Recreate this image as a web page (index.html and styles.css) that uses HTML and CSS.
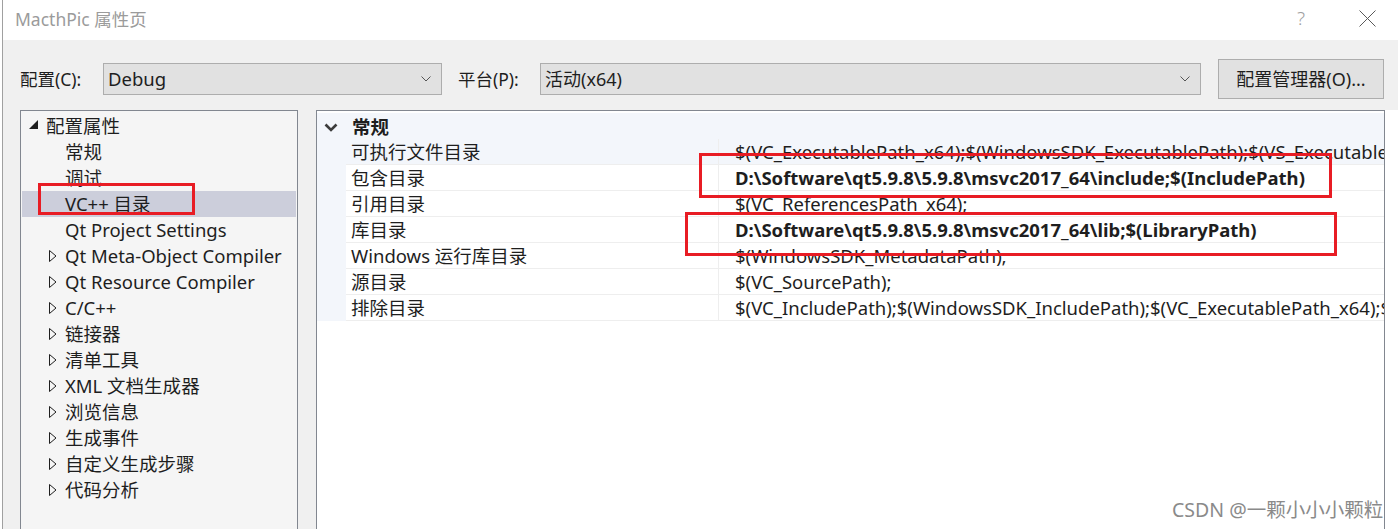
FILE: index.html
```html
<!DOCTYPE html>
<html lang="zh-CN">
<head>
<meta charset="utf-8">
<title>MacthPic 属性页</title>
<link rel="stylesheet" href="styles.css">
</head>
<body>
<div class="window">
  <div class="titlebar">
    <span class="title">MacthPic 属性页</span>
    <div class="title-actions">
      <span class="help">?</span>
      <svg class="close" width="17" height="17" viewBox="0 0 17 17"><path d="M0.5 0.5L16.5 16.5M16.5 0.5L0.5 16.5" stroke="#5a5a5a" stroke-width="1" fill="none"/></svg>
    </div>
  </div>
  <div class="content">
    <div class="toolbar">
      <label class="lbl lbl-config">配置(C):</label>
      <div class="combo combo-config">
        <span>Debug</span>
        <svg class="chev" width="10" height="6" viewBox="0 0 10 6"><path d="M0.5 0.5L5 5L9.5 0.5" stroke="#555" fill="none"/></svg>
      </div>
      <label class="lbl lbl-platform">平台(P):</label>
      <div class="combo combo-platform">
        <span>活动(x64)</span>
        <svg class="chev" width="10" height="6" viewBox="0 0 10 6"><path d="M0.5 0.5L5 5L9.5 0.5" stroke="#555" fill="none"/></svg>
      </div>
      <button class="btn">配置管理器(O)...</button>
    </div>
    <div class="panes">
      <div class="tree">
        <div class="item root"><span class="twisty"><svg width="9" height="9" viewBox="0 0 9 9"><polygon points="9,0 9,9 0,9" fill="#1e1e1e"/></svg></span>配置属性</div>
        <div class="item child"><span class="twisty"></span>常规</div>
        <div class="item child"><span class="twisty"></span>调试</div>
        <div class="item child selected"><span class="twisty"></span>VC++ 目录</div>
        <div class="item child"><span class="twisty"></span>Qt Project Settings</div>
        <div class="item child"><span class="twisty"><svg width="8" height="12" viewBox="0 0 8 12"><polygon points="0.5,0.5 7,6 0.5,11.5" fill="none" stroke="#1e1e1e"/></svg></span>Qt Meta-Object Compiler</div>
        <div class="item child"><span class="twisty"><svg width="8" height="12" viewBox="0 0 8 12"><polygon points="0.5,0.5 7,6 0.5,11.5" fill="none" stroke="#1e1e1e"/></svg></span>Qt Resource Compiler</div>
        <div class="item child"><span class="twisty"><svg width="8" height="12" viewBox="0 0 8 12"><polygon points="0.5,0.5 7,6 0.5,11.5" fill="none" stroke="#1e1e1e"/></svg></span>C/C++</div>
        <div class="item child"><span class="twisty"><svg width="8" height="12" viewBox="0 0 8 12"><polygon points="0.5,0.5 7,6 0.5,11.5" fill="none" stroke="#1e1e1e"/></svg></span>链接器</div>
        <div class="item child"><span class="twisty"><svg width="8" height="12" viewBox="0 0 8 12"><polygon points="0.5,0.5 7,6 0.5,11.5" fill="none" stroke="#1e1e1e"/></svg></span>清单工具</div>
        <div class="item child"><span class="twisty"><svg width="8" height="12" viewBox="0 0 8 12"><polygon points="0.5,0.5 7,6 0.5,11.5" fill="none" stroke="#1e1e1e"/></svg></span>XML 文档生成器</div>
        <div class="item child"><span class="twisty"><svg width="8" height="12" viewBox="0 0 8 12"><polygon points="0.5,0.5 7,6 0.5,11.5" fill="none" stroke="#1e1e1e"/></svg></span>浏览信息</div>
        <div class="item child"><span class="twisty"><svg width="8" height="12" viewBox="0 0 8 12"><polygon points="0.5,0.5 7,6 0.5,11.5" fill="none" stroke="#1e1e1e"/></svg></span>生成事件</div>
        <div class="item child"><span class="twisty"><svg width="8" height="12" viewBox="0 0 8 12"><polygon points="0.5,0.5 7,6 0.5,11.5" fill="none" stroke="#1e1e1e"/></svg></span>自定义生成步骤</div>
        <div class="item child"><span class="twisty"><svg width="8" height="12" viewBox="0 0 8 12"><polygon points="0.5,0.5 7,6 0.5,11.5" fill="none" stroke="#1e1e1e"/></svg></span>代码分析</div>
      </div>
      <div class="grid">
        <div class="row header">
          <div class="margin"><svg width="14" height="9" viewBox="0 0 14 9"><path d="M1.5 1.5L7 7L12.5 1.5" stroke="#3c3c3c" stroke-width="2.6" fill="none"/></svg></div>
          <div class="cat">常规</div>
        </div>
        <div class="row prop focus">
          <div class="margin"></div>
          <div class="name">可执行文件目录</div>
          <div class="value">$(VC_ExecutablePath_x64);$(WindowsSDK_ExecutablePath);$(VS_Executable</div>
        </div>
        <div class="row prop">
          <div class="margin"></div>
          <div class="name">包含目录</div>
          <div class="value bold">D:\Software\qt5.9.8\5.9.8\msvc2017_64\include;$(IncludePath)</div>
        </div>
        <div class="row prop">
          <div class="margin"></div>
          <div class="name">引用目录</div>
          <div class="value">$(VC_ReferencesPath_x64);</div>
        </div>
        <div class="row prop">
          <div class="margin"></div>
          <div class="name">库目录</div>
          <div class="value bold">D:\Software\qt5.9.8\5.9.8\msvc2017_64\lib;$(LibraryPath)</div>
        </div>
        <div class="row prop">
          <div class="margin"></div>
          <div class="name">Windows 运行库目录</div>
          <div class="value">$(WindowsSDK_MetadataPath);</div>
        </div>
        <div class="row prop">
          <div class="margin"></div>
          <div class="name">源目录</div>
          <div class="value">$(VC_SourcePath);</div>
        </div>
        <div class="row prop">
          <div class="margin"></div>
          <div class="name">排除目录</div>
          <div class="value">$(VC_IncludePath);$(WindowsSDK_IncludePath);$(VC_ExecutablePath_x64);$</div>
        </div>
      </div>
      <div class="side"></div>
    </div>
  </div>
  <div class="mark mark-1"></div>
  <div class="mark mark-2"></div>
  <div class="mark mark-3"></div>
  <div class="watermark">CSDN @一颗小小小颗粒</div>
</div>
</body>
</html>
```

FILE: styles.css
```css
* { box-sizing: border-box; }
html, body {
  margin: 0;
  padding: 0;
  height: 100%;
  overflow: hidden;
  background: #ffffff;
}
body {
  font-family: "Noto Sans", "Noto Sans CJK SC", sans-serif;
  font-size: 18px;
  color: #1e1e1e;
}
.window {
  position: relative;
  margin-left: 2px;
  height: 529px;
  border-left: 1px solid #a0a0a0;
  display: flex;
  flex-direction: column;
  overflow: hidden;
}
.titlebar {
  height: 40px;
  flex: none;
  background: #ffffff;
  display: flex;
  align-items: center;
  justify-content: space-between;
  padding-left: 12px;
}
.title {
  color: #9b9b9b;
  font-size: 17.5px;
  margin-top: -4px;
}
.title-actions {
  display: flex;
  align-items: center;
  gap: 54px;
  padding-right: 22px;
  margin-top: -4px;
}
.help {
  color: #a0a0a0;
  font-size: 19px;
  font-family: "Noto Sans", sans-serif;
  font-weight: 300;
}
.content {
  flex: 1;
  background: #f0f0f0;
  padding: 19px 0 0 17px;
  display: flex;
  flex-direction: column;
  min-height: 0;
}
.toolbar {
  height: 40px;
  display: flex;
  align-items: center;
  flex: none;
}
.lbl {
  font-size: 17.5px;
  color: #1e1e1e;
  width: 83px;
  padding-bottom: 1px;
}
.lbl-platform {
  width: 82px;
  margin-left: 16px;
}
.combo {
  height: 32px;
  background: #e1e1e1;
  border: 1px solid #adadad;
  display: flex;
  align-items: center;
  justify-content: space-between;
  padding: 0 10px 2px 4px;
  font-size: 18.5px;
  color: #1e1e1e;
}
.combo-config { width: 339px; }
.combo-platform { width: 661px; }
.combo-platform span { font-size: 18px; }
.chev { flex: none; margin-top: 2px; }
.btn {
  margin-left: 17px;
  width: 166px;
  height: 40px;
  background: #e1e1e1;
  border: 1px solid #adadad;
  font-family: inherit;
  font-size: 18px;
  color: #1e1e1e;
  padding: 0 0 2px 0;
}
.panes {
  margin-top: 11px;
  flex: 1;
  display: flex;
  min-height: 0;
}
.tree {
  width: 278px;
  flex: none;
  background: #f5f5f5;
  border: 1px solid #828790;
  border-bottom: none;
  padding: 2px 1px 0 1px;
}
.item {
  height: 26px;
  display: flex;
  align-items: center;
  white-space: nowrap;
  font-size: 18.5px;
  padding-bottom: 2px;
}
.item.root { padding-left: 7px; }
.item.root .twisty { width: 17px; }
.item.child { padding-left: 27px; }
.item.child .twisty { width: 16px; }
.twisty {
  display: flex;
  align-items: center;
  flex: none;
  height: 100%;
}
.item.root .twisty svg { margin-top: -1px; }
.item.child .twisty svg { margin-top: 2px; }
.item.selected { background: #cccedb; }
.grid {
  width: 1069px;
  flex: none;
  margin-left: 18px;
  background: #ffffff;
  border: 1px solid #828790;
  border-bottom: none;
  padding-top: 2px;
  overflow: hidden;
}
.side {
  flex: 1;
  background: #ffffff;
}
.row {
  height: 26px;
  display: grid;
  grid-template-columns: 29px 372px 1fr;
  align-items: stretch;
  white-space: nowrap;
  font-size: 18.5px;
}
.row.header { background: #f3f6fb; }
.row.focus { background: #f3f6fb; }
.margin {
  background: #f3f6fb;
  display: flex;
  align-items: center;
  padding-left: 7px;
}
.cat {
  grid-column: 2 / 4;
  font-weight: 700;
  padding-left: 6px;
  padding-bottom: 2px;
  display: flex;
  align-items: center;
}
.name, .value {
  display: flex;
  align-items: center;
  border-bottom: 1px solid #eeeeee;
  overflow: hidden;
  padding-bottom: 1px;
}
.name { padding-left: 5px; }
.value {
  padding-left: 16px;
  border-left: 1px solid #eeeeee;
}
.value.bold { font-weight: 700; font-size: 18.5px; }
.mark {
  position: absolute;
  border: 3px solid #e81c24;
  pointer-events: none;
}
.mark-1 { left: 35px; top: 183px; width: 157px; height: 32px; }
.mark-2 { left: 696px; top: 153px; width: 633px; height: 45px; }
.mark-3 { left: 682px; top: 212px; width: 652px; height: 44px; }
.watermark {
  position: absolute;
  left: 1169px;
  top: 494px;
  font-size: 19.5px;
  color: #8a8a8a;
  white-space: nowrap;
}
```
